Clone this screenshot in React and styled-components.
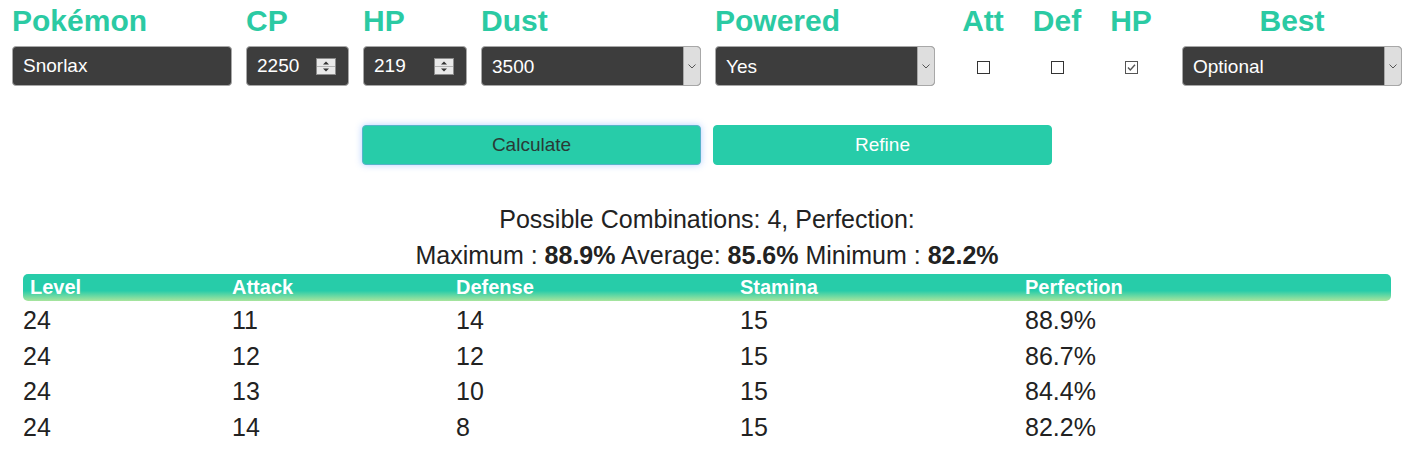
import styled, { createGlobalStyle } from "styled-components";

const GlobalStyle = createGlobalStyle`
  body {
    margin: 0;
    background: #fff;
    font-family: "Liberation Sans", Arial, sans-serif;
    color: #222;
  }
`;

const teal = "#2bcaa3";
const btnTeal = "#27cca9";

const Page = styled.main`
  width: 1414px;
  padding-top: 3px;
`;

const FieldRow = styled.section`
  display: flex;
  justify-content: center;
  gap: 14px;
`;

const Field = styled.div`
  display: flex;
  flex-direction: column;
  width: ${(p) => p.$w}px;
`;

const Label = styled.label`
  font-size: 30px;
  font-weight: 700;
  line-height: 36px;
  color: ${teal};
  margin-bottom: 7px;
  text-align: ${(p) => (p.$center ? "center" : "left")};
`;

const Box = styled.div`
  display: flex;
  align-items: center;
  height: 40px;
  box-sizing: border-box;
  background: #3d3d3d;
  border: 1px solid #a8a8a8;
  border-radius: 4px;
  overflow: hidden;
`;

const BoxInput = styled.input`
  flex: 1;
  min-width: 0;
  height: 100%;
  background: transparent;
  border: none;
  outline: none;
  color: #fff;
  font-family: inherit;
  font-size: 19px;
  padding: 0 10px;
`;

const BoxSelect = styled.select`
  flex: 1;
  min-width: 0;
  height: 100%;
  appearance: none;
  background: transparent;
  border: none;
  outline: none;
  color: #fff;
  font-family: inherit;
  font-size: 19px;
  padding: 0 10px;
`;

const Spinner = styled.span`
  display: flex;
  width: 20px;
  height: 17px;
  margin-right: 12px;
`;

const ArrowBox = styled.span`
  display: flex;
  align-items: center;
  justify-content: center;
  align-self: stretch;
  width: 16px;
  background: #dedede;
  border-left: 1px solid #a8a8a8;
`;

const CheckGroup = styled.div`
  display: flex;
  gap: 14px;
  padding: 0 7px 0 4px;
`;

const CheckCell = styled.div`
  height: 40px;
  display: flex;
  align-items: center;
  justify-content: center;
  padding-top: 3px;
  box-sizing: border-box;
`;

const Check = styled.span`
  display: flex;
  width: 13px;
  height: 13px;
  box-sizing: border-box;
  border: 1px solid ${(p) => (p.$on ? "#555" : "#333")};
  background: #fff;
`;

const ButtonRow = styled.div`
  display: flex;
  justify-content: center;
  gap: 12px;
  margin-top: 39px;
`;

const Button = styled.button`
  width: 339px;
  height: 40px;
  border-radius: 4px;
  background: ${btnTeal};
  border: 1px solid ${(p) => (p.$focus ? "#57b3c9" : btnTeal)};
  box-shadow: ${(p) => (p.$focus ? "0 0 7px rgba(90, 150, 255, 0.45)" : "none")};
  color: ${(p) => (p.$focus ? "#2a3a36" : "#fff")};
  font-family: inherit;
  font-size: 19px;
`;

const Summary = styled.div`
  margin-top: 36px;
  text-align: center;
  font-size: 25px;
  line-height: 36px;
  color: #222;
  b {
    font-weight: 700;
  }
`;

const Table = styled.div`
  width: 1368px;
  margin: 1px auto 0;
`;

const cols = "209px 224px 284px 285px 1fr";

const HeadRow = styled.div`
  display: grid;
  grid-template-columns: ${cols};
  height: 27px;
  border-radius: 5px;
  background: linear-gradient(to bottom, ${btnTeal} 0%, ${btnTeal} 62%, #a9e59d 100%);
  color: #fff;
  font-weight: 700;
  font-size: 20px;
  line-height: 27px;
`;

const HeadCell = styled.span`
  padding-left: ${(p) => (p.$first ? 7 : 0)}px;
`;

const BodyRows = styled.div`
  margin-top: 2px;
`;

const Row = styled.div`
  display: grid;
  grid-template-columns: ${cols};
  height: 35.7px;
  line-height: 35.7px;
  font-size: 25px;
  color: #222;
`;

const SpinIcon = () => (
  <svg width="20" height="17" viewBox="0 0 20 17">
    <rect x="0.5" y="0.5" width="19" height="16" fill="#e9e9e9" stroke="#8c8c8c" />
    <line x1="1" y1="8.5" x2="19" y2="8.5" stroke="#b5b5b5" />
    <path d="M7 6.5 L10 3.5 L13 6.5 Z" fill="#333" />
    <path d="M7 10.5 L10 13.5 L13 10.5 Z" fill="#333" />
  </svg>
);

const Chevron = () => (
  <svg width="8" height="5" viewBox="0 0 8 5">
    <polyline points="0.5,0.5 4,4 7.5,0.5" fill="none" stroke="#555" strokeWidth="1" />
  </svg>
);

const TickIcon = () => (
  <svg width="11" height="11" viewBox="0 0 11 11">
    <polyline points="2,5.5 4.3,8 9,2.8" fill="none" stroke="#555" strokeWidth="1.4" />
  </svg>
);

const NumberField = ({ label, value, w }) => (
  <Field $w={w}>
    <Label>{label}</Label>
    <Box>
      <BoxInput defaultValue={value} />
      <Spinner>
        <SpinIcon />
      </Spinner>
    </Box>
  </Field>
);

const SelectField = ({ label, value, center }) => (
  <Field $w={220}>
    <Label $center={center}>{label}</Label>
    <Box>
      <BoxSelect defaultValue={value}>
        <option>{value}</option>
      </BoxSelect>
      <ArrowBox>
        <Chevron />
      </ArrowBox>
    </Box>
  </Field>
);

const CheckField = ({ label, on }) => (
  <Field $w={60}>
    <Label $center>{label}</Label>
    <CheckCell>
      <Check $on={on}>{on && <TickIcon />}</Check>
    </CheckCell>
  </Field>
);

const rows = [
  [24, 11, 14, 15, "88.9%"],
  [24, 12, 12, 15, "86.7%"],
  [24, 13, 10, 15, "84.4%"],
  [24, 14, 8, 15, "82.2%"],
];

const App = () => {
  return (
    <Page>
      <GlobalStyle />
      <FieldRow>
        <Field $w={220}>
          <Label>Pokémon</Label>
          <Box>
            <BoxInput defaultValue="Snorlax" />
          </Box>
        </Field>
        <NumberField label="CP" value="2250" w={103} />
        <NumberField label="HP" value="219" w={104} />
        <SelectField label="Dust" value="3500" />
        <SelectField label="Powered" value="Yes" />
        <CheckGroup>
          <CheckField label="Att" />
          <CheckField label="Def" />
          <CheckField label="HP" on />
        </CheckGroup>
        <SelectField label="Best" value="Optional" center />
      </FieldRow>
      <ButtonRow>
        <Button $focus>Calculate</Button>
        <Button>Refine</Button>
      </ButtonRow>
      <Summary>
        <div>Possible Combinations: 4, Perfection:</div>
        <div>
          Maximum : <b>88.9%</b> Average: <b>85.6%</b> Minimum : <b>82.2%</b>
        </div>
      </Summary>
      <Table>
        <HeadRow>
          <HeadCell $first>Level</HeadCell>
          <HeadCell>Attack</HeadCell>
          <HeadCell>Defense</HeadCell>
          <HeadCell>Stamina</HeadCell>
          <HeadCell>Perfection</HeadCell>
        </HeadRow>
        <BodyRows>
          {rows.map((r, i) => (
            <Row key={i}>
              {r.map((v, j) => (
                <span key={j}>{v}</span>
              ))}
            </Row>
          ))}
        </BodyRows>
      </Table>
    </Page>
  );
};

export default App;
